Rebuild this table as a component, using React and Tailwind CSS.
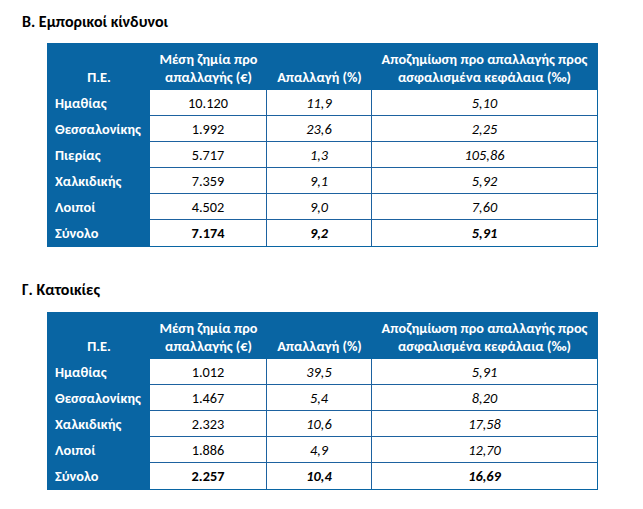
import React from "react";

const F = { fontFamily: '"Carlito", "Liberation Sans", sans-serif' };

const t1 = [
  ["Ημαθίας", "10.120", "11,9", "5,10"],
  ["Θεσσαλονίκης", "1.992", "23,6", "2,25"],
  ["Πιερίας", "5.717", "1,3", "105,86"],
  ["Χαλκιδικής", "7.359", "9,1", "5,92"],
  ["Λοιποί", "4.502", "9,0", "7,60"],
];
const t1total = ["Σύνολο", "7.174", "9,2", "5,91"];

const t2 = [
  ["Ημαθίας", "1.012", "39,5", "5,91"],
  ["Θεσσαλονίκης", "1.467", "5,4", "8,20"],
  ["Χαλκιδικής", "2.323", "10,6", "17,58"],
  ["Λοιποί", "1.886", "4,9", "12,70"],
];
const t2total = ["Σύνολο", "2.257", "10,4", "16,69"];

function Row({ r, total, last }) {
  const b = last ? "" : "border-b border-b-[#1d62a0]";
  const wt = total ? "font-bold" : "font-normal";
  return (
    <div className="grid grid-cols-[102px_117px_105px_225px] h-[26px]">
      <div className={`bg-[#0965a3] text-white font-bold flex items-center pl-[7px] ${last ? "" : "border-b border-b-[#0965a3]"}`}>
        {r[0]}
      </div>
      <div className={`flex items-center justify-center text-black border-r border-r-[#1d62a0] ${b} ${wt}`}>{r[1]}</div>
      <div className={`flex items-center justify-center text-black italic border-r border-r-[#1d62a0] ${b} ${wt}`}>{r[2]}</div>
      <div className={`flex items-center justify-center text-black italic ${b} ${wt}`}>{r[3]}</div>
    </div>
  );
}

function Table({ rows, total }) {
  return (
    <div className="ml-[47px] w-[551px] border border-[#0965a3] text-[14.3px] leading-[18px]">
      <div className="grid grid-cols-[102px_117px_105px_225px] h-[46px] bg-[#0965a3] text-white font-bold border-b border-b-[#0965a3] text-center">
        <div className="flex items-end justify-center pb-[3px]">Π.Ε.</div>
        <div className="flex items-end justify-center pb-[3px]">
          Μέση ζημία προ
          <br />
          απαλλαγής (€)
        </div>
        <div className="flex items-end justify-center pb-[3px]">Απαλλαγή (%)</div>
        <div className="flex items-end justify-center pb-[3px]">
          Αποζημίωση προ απαλλαγής προς
          <br />
          ασφαλισμένα κεφάλαια (‰)
        </div>
      </div>
      {rows.map((r, i) => (
        <Row key={i} r={r} />
      ))}
      <Row r={total} total last />
    </div>
  );
}

export default function App() {
  return (
    <div className="w-[643px] h-[509px] bg-white pt-[12px]" style={F}>
      <div className="pl-[22px] text-[16px] leading-[20px] font-bold text-black">Β. Εμπορικοί κίνδυνοι</div>
      <div className="mt-[11px]">
        <Table rows={t1} total={t1total} />
      </div>
      <div className="pl-[22px] mt-[33px] text-[16px] leading-[20px] font-bold text-black">Γ. Κατοικίες</div>
      <div className="mt-[12px]">
        <Table rows={t2} total={t2total} />
      </div>
    </div>
  );
}
